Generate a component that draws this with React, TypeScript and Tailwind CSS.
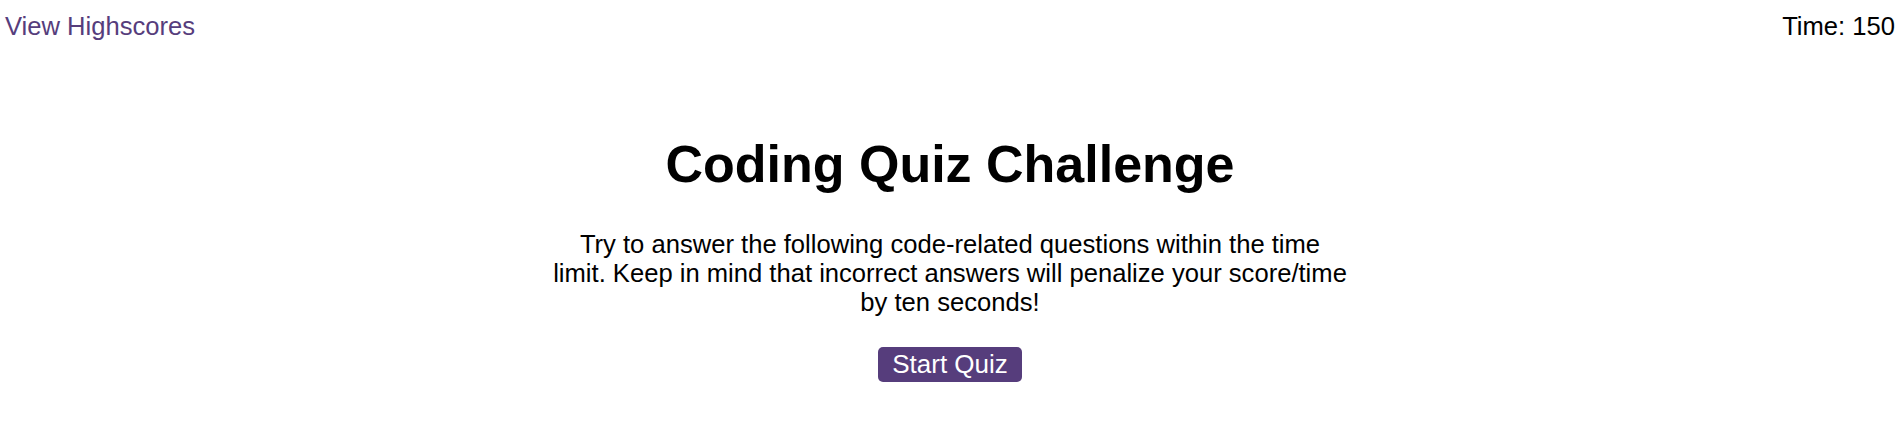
export default function App() {
  return (
    <div className="min-h-[424px] bg-white font-['Liberation_Sans',Arial,sans-serif] text-black">
      <header className="flex items-start justify-between pl-[5px] pr-[5px] pt-[11px]">
        <a href="#" className="text-[25.6px] leading-[30px] text-[#563d7c]">
          View Highscores
        </a>
        <span className="text-[25.6px] leading-[30px]">Time: 150</span>
      </header>

      <main className="mx-auto flex w-[840px] flex-col items-center pt-[93px] text-center">
        <h1 className="text-[52px] font-bold leading-[60px]">Coding Quiz Challenge</h1>
        <p className="mt-[36px] text-[25.6px] leading-[29px]">
          Try to answer the following code-related questions within the time
          <br />
          limit. Keep in mind that incorrect answers will penalize your score/time
          <br />
          by ten seconds!
        </p>
        <button className="mt-[30px] rounded-[5px] bg-[#563d7c] px-[14px] py-[2px] text-[26px] leading-[31px] text-white">
          Start Quiz
        </button>
      </main>
    </div>
  )
}
